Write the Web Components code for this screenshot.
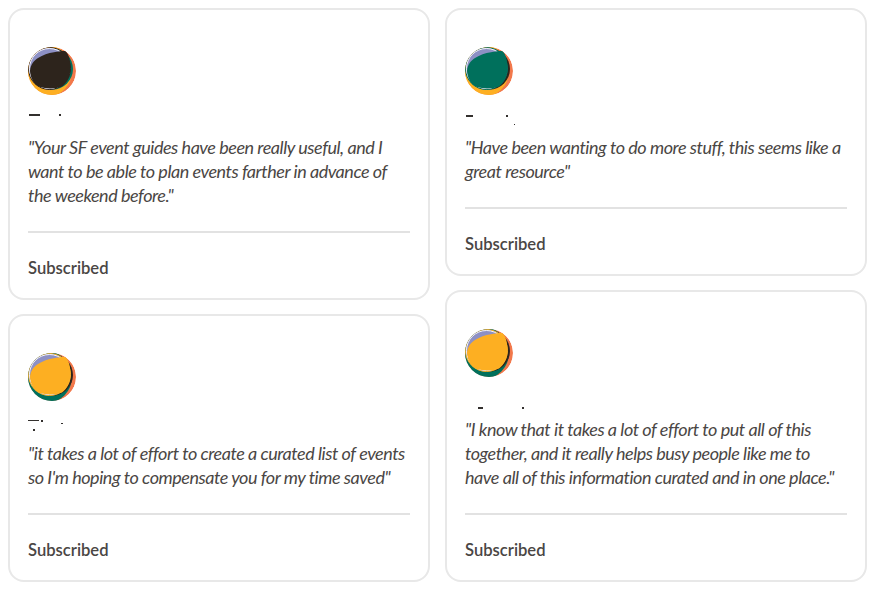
<!DOCTYPE html>
<html>
<head>
<meta charset="utf-8">
<title>Testimonials</title>
<style>
  html, body { margin: 0; background: #fff; }
</style>
</head>
<body>
<testimonial-wall>
  <testimonial-card slot="left" main="#2d241c" side="#00705c" low="#fdaf22" marks="1,19,11,1.5 31,19,2,2">
    "Your SF event guides have been really useful, and I want to be able to plan events farther in advance of the weekend before."
  </testimonial-card>
  <testimonial-card slot="left" main="#fdaf22" side="#2d241c" low="#00705c" marks="0,19,11,1 13,19,2,1.5 33,22,2,1 5,28,2,2">
    "it takes a lot of effort to create a curated list of events so I'm hoping to compensate you for my time saved"
  </testimonial-card>
  <testimonial-card slot="right" main="#00705c" side="#2d241c" low="#fdaf22" marks="1,20,7,2 41,20,1.5,1.5 49,29,1,1">
    "Have been wanting to do more stuff, this seems like a great resource"
  </testimonial-card>
  <testimonial-card slot="right" main="#fdaf22" side="#2d241c" low="#00705c" marks="13,30,5,2 57,30,2,2">
    "I know that it takes a lot of effort to put all of this together, and it really helps busy people like me to have all of this information curated and in one place."
  </testimonial-card>
</testimonial-wall>

<script>
class TestimonialWall extends HTMLElement {
  constructor() {
    super();
    this._root = this.attachShadow({ mode: 'open' });
  }

  connectedCallback() {
    this._root.innerHTML = `
    <style>
      :host {
        display: flex;
        gap: 15px;
        padding: 8px 5px 0 8px;
        font-family: "Lato", "Liberation Sans", sans-serif;
        color: #3f3b3a;
      }
      .col {
        flex: 1 1 0;
        min-width: 0;
        display: flex;
        flex-direction: column;
        gap: 14px;
      }
    </style>
    <div class="col"><slot name="left"></slot></div>
    <div class="col"><slot name="right"></slot></div>
    `;
  }
}
customElements.define('testimonial-wall', TestimonialWall);

let avatarCount = 0;

class BlendAvatar extends HTMLElement {
  constructor() {
    super();
    this._root = this.attachShadow({ mode: 'open' });
  }

  connectedCallback() {
    const main = this.getAttribute('main');
    const side = this.getAttribute('side');
    const low = this.getAttribute('low');
    const clip = `disc${++avatarCount}`;
    this._root.innerHTML = `
    <style>
      :host { display: block; width: 48px; height: 48px; }
      svg { display: block; }
    </style>
    <svg width="48" height="48" viewBox="0 0 48 48">
      <clipPath id="${clip}"><circle cx="24" cy="24" r="24"/></clipPath>
      <g clip-path="url(#${clip})">
        <circle cx="24" cy="24" r="24" fill="#f2784b"/>
        <circle cx="18" cy="24" r="26" fill="${low}"/>
        <circle cx="24.5" cy="22" r="20.5" fill="${side}"/>
        <circle cx="21.5" cy="21.5" r="21" fill="#8d90c4" stroke="${main}" stroke-width="1"/>
        <circle cx="21.5" cy="21.5" r="20" fill="none" stroke="#fff" stroke-width="0.9"/>
        <path d="M2 24C2.500 17.500 6 13.500 10 11C15 8 20 6 26 5.200C31 4.500 35.500 3.500 38 4.500C41 8 42.500 14 42.500 21C42.500 29 39 36 34 39.500C28 42 18 42 12 40C6 38 2.500 31 2 24Z" fill="${main}"/>
      </g>
    </svg>
    `;
  }
}
customElements.define('blend-avatar', BlendAvatar);

class TestimonialCard extends HTMLElement {
  constructor() {
    super();
    this._root = this.attachShadow({ mode: 'open' });
  }

  getStyle() {
    return `
    <style>
      :host {
        display: block;
        box-sizing: border-box;
        border: 2px solid #e8e8e8;
        border-radius: 16px;
        padding: 37px 18px 18px;
        background: #fff;
      }
      .name {
        height: 40px;
        position: relative;
      }
      .mark {
        position: absolute;
        background: #33302e;
      }
      .quote {
        font-style: italic;
        font-size: 18px;
        line-height: 24px;
        letter-spacing: -0.465px;
        color: #4a4644;
      }
      hr {
        border: 0;
        height: 1.5px;
        background: #e2e2e2;
        margin: 24px 0 0;
      }
      .status {
        margin-top: 23.5px;
        font-size: 16.6px;
        line-height: 24px;
        font-weight: 600;
        color: #4a4644;
      }
    </style>
    `;
  }

  connectedCallback() {
    this._render();
  }

  _render() {
    const attr = n => this.getAttribute(n);
    // names are blanked out in the source, only a few specks are left
    const marks = (attr('marks') || '').split(' ').map(m => {
      const [x, y, w, h] = m.split(',');
      return `<span class="mark" style="left:${x}px;top:${y}px;width:${w}px;height:${h}px"></span>`;
    }).join('');
    this._root.innerHTML = `
    ${this.getStyle()}
    <blend-avatar main="${attr('main')}" side="${attr('side')}" low="${attr('low')}"></blend-avatar>
    <div class="name">${marks}</div>
    <div class="quote"><slot></slot></div>
    <hr>
    <div class="status">Subscribed</div>
    `;
  }
}
customElements.define('testimonial-card', TestimonialCard);
</script>
</body>
</html>
